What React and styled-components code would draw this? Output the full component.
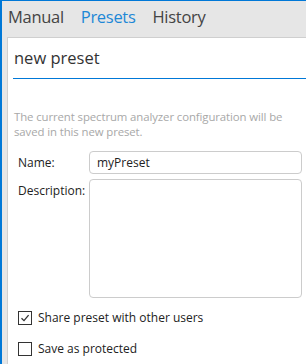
import styled, { createGlobalStyle } from 'styled-components';

const GlobalStyle = createGlobalStyle`
    html, body {
        margin: 0;
        padding: 0;
        background: #ffffff;
    }
    * {
        box-sizing: border-box;
    }
`

const Frame = styled.div`
    width: 306px;
    height: 364px;
    display: flex;
    flex-direction: column;
    background: #e6e6e6;
    border-top: 1px solid #0078d7;
    border-left: 2px solid #0078d7;
    font-family: "Open Sans", "Noto Sans", sans-serif;
    color: #333333;
    overflow: hidden;
`
const TabBar = styled.div`
    height: 36px;
    display: flex;
    align-items: center;
    gap: 17px;
    padding: 0 0 5px 6px;
    flex-shrink: 0;
`
const Tab = styled.span`
    font-size: 16.5px;
    color: ${(props) => (props.$active ? '#1e88d6' : '#444444')};
    letter-spacing: -0.3px;
`
const Panel = styled.div`
    flex: 1;
    margin-left: 5px;
    background: #ffffff;
    border-top: 1px solid #cfcfcf;
    border-left: 1px solid #cfcfcf;
    display: flex;
    flex-direction: column;
`
const Title = styled.div`
    margin-left: 5px;
    height: 41px;
    padding-top: 8px;
    padding-left: 1px;
    font-size: 16.5px;
    color: #333333;
    border-bottom: 1px solid #0078d7;
`
const Info = styled.p`
    margin: 30px 8px 0 6px;
    font-size: 11.4px;
    line-height: 15px;
    color: #a8a8a8;
    letter-spacing: -0.1px;
`
const Form = styled.div`
    margin: 12px 4px 0 10px;
    display: grid;
    grid-template-columns: 71px 1fr;
    row-gap: 5px;
`
const Label = styled.label`
    font-size: 12px;
    line-height: 23px;
    color: #222222;
`
const TextInput = styled.input`
    height: 23px;
    border: 1px solid #cccccc;
    border-radius: 4px;
    padding: 0 7px;
    font-family: inherit;
    font-size: 12px;
    color: #222222;
    outline: none;
`
const TextArea = styled.textarea`
    height: 119px;
    border: 1px solid #cccccc;
    border-radius: 4px;
    resize: none;
    font-family: inherit;
    outline: none;
`
const Options = styled.div`
    margin: 11px 0 0 10px;
    display: flex;
    flex-direction: column;
    gap: 14px;
`
const CheckRow = styled.label`
    display: flex;
    align-items: center;
    gap: 6px;
    font-size: 12px;
    color: #222222;
`
const Box = styled.span`
    width: 14px;
    height: 14px;
    border: 1px solid #333333;
    background: #ffffff;
    display: flex;
    align-items: center;
    justify-content: center;
`

const Check = ({ checked }) => (
    <Box>
        {checked && (
            <svg width="10" height="10" viewBox="0 0 10 10">
                <path d="M1.5 5.2 L4 7.6 L8.6 2.2" fill="none" stroke="#333" strokeWidth="1.3" />
            </svg>
        )}
    </Box>
)

const App = () => {
    return (
        <>
            <GlobalStyle />
            <Frame>
                <TabBar>
                    <Tab>Manual</Tab>
                    <Tab $active>Presets</Tab>
                    <Tab>History</Tab>
                </TabBar>
                <Panel>
                    <Title>new preset</Title>
                    <Info>
                        The current spectrum analyzer configuration will be saved in this new preset.
                    </Info>
                    <Form>
                        <Label>Name:</Label>
                        <TextInput defaultValue="myPreset" />
                        <Label>Description:</Label>
                        <TextArea />
                    </Form>
                    <Options>
                        <CheckRow>
                            <Check checked />
                            Share preset with other users
                        </CheckRow>
                        <CheckRow>
                            <Check />
                            Save as protected
                        </CheckRow>
                    </Options>
                </Panel>
            </Frame>
        </>
    )
}

export default App;
